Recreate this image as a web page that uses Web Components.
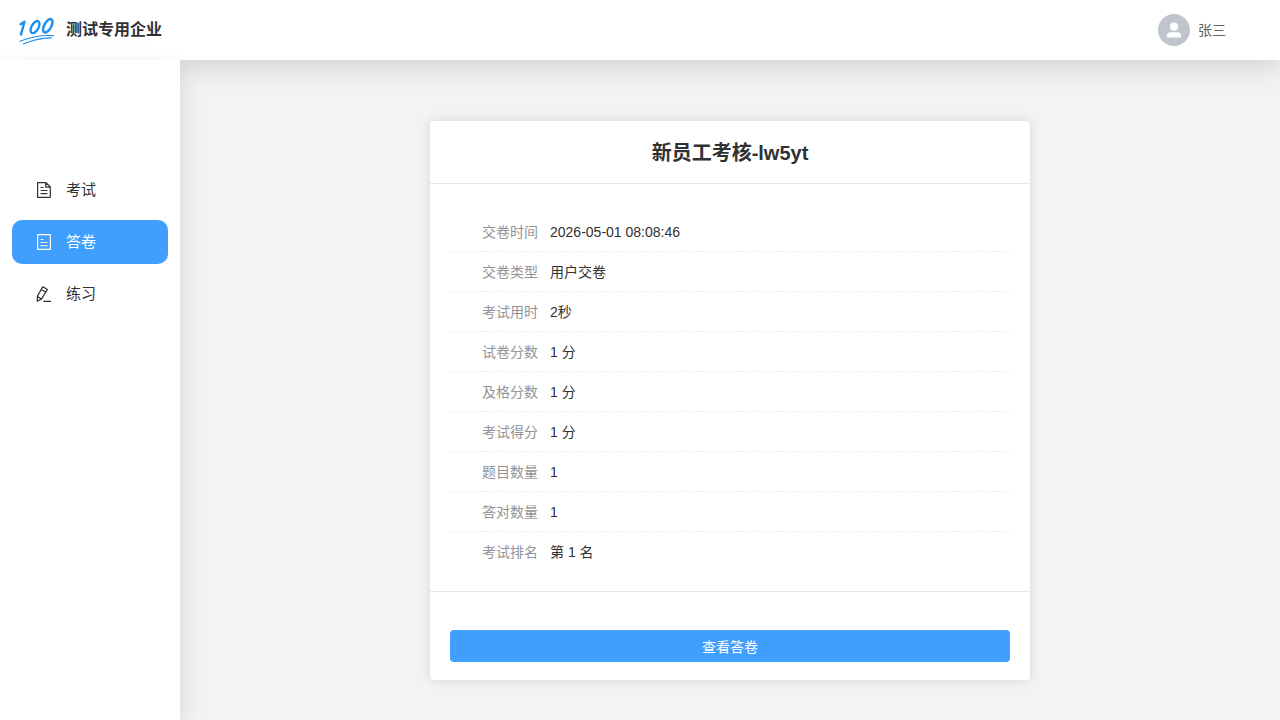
<!DOCTYPE html>
<html lang="zh-CN">
<head>
<meta charset="utf-8">
<meta name="viewport" content="width=device-width, initial-scale=1">
<title>新员工考核</title>
<style>
  html, body { height: 100%; }
  body {
    margin: 0;
    font-family: "Liberation Sans", "Noto Sans CJK SC", sans-serif;
    font-size: 14px;
    color: #303133;
    --primary: #409eff;
    --page: #f2f3f5;
    --muted: #909399;
    --line: #e4e7ed;
    --shadow-deep: 0 12px 32px 4px rgba(0,0,0,.04), 0 8px 20px rgba(0,0,0,.08);
    --shadow-light: 0 0 12px rgba(0,0,0,.12);
  }
</style>
</head>
<body>
<exam-app>
  <app-header slot="header" user="张三">测试专用企业</app-header>
  <nav-menu slot="side">
    <nav-item icon="exam">考试</nav-item>
    <nav-item icon="paper" active>答卷</nav-item>
    <nav-item icon="practice">练习</nav-item>
  </nav-menu>
  <result-card>
    <span slot="title">新员工考核-lw5yt</span>
    <result-list></result-list>
    <primary-button slot="footer">查看答卷</primary-button>
  </result-card>
</exam-app>

<script>
class BaseElement extends HTMLElement {
  connectedCallback() {
    if (!this.shadowRoot) this.attachShadow({ mode: "open" }).innerHTML = this.render();
  }
}

customElements.define("exam-app", class extends BaseElement {
  render() {
    return `<style>
      :host { display: grid; grid-template: 60px 1fr / 180px 1fr; min-height: 100vh; overflow: hidden; background: var(--page); }
      main { display: flex; justify-content: center; align-items: flex-start; padding: 61px 20px 40px; }
    </style>
    <slot name="header"></slot><slot name="side"></slot><main><slot></slot></main>`;
  }
});

customElements.define("app-header", class extends BaseElement {
  render() {
    return `<style>
      :host { display: flex; grid-column: 1 / -1; z-index: 1; align-items: center; justify-content: space-between; padding: 0 54px 0 18px; background: #fff; box-shadow: var(--shadow-deep); }
      .brand { display: flex; align-items: center; gap: 12px; margin: 0; font-size: 16px; line-height: 24px; font-weight: 700; }
      .user { display: flex; align-items: center; gap: 8px; color: #606266; line-height: 20px; }
      svg { display: block; }
    </style>
    <h1 class="brand">
      <svg width="36" height="30" viewBox="0 0 36 30" fill="none" stroke="#1e90ee" stroke-linecap="round" aria-hidden="true">
        <path d="M2.6 9.2 6.5 6.8 2.9 19.6" stroke-width="2.4" stroke-linejoin="round"/>
        <ellipse cx="17" cy="12.1" rx="3.4" ry="6.7" transform="rotate(30 17 12.1)" stroke-width="2.4"/>
        <ellipse cx="29.8" cy="10.8" rx="3.5" ry="7.4" transform="rotate(29 29.8 10.8)" stroke-width="2.5"/>
        <path d="M2 26.2C12 22.2 24 19.9 35.3 20.7M5.4 29C14 25.2 22 23.3 33.3 22.9" stroke-width="1.2"/>
      </svg>
      <slot></slot>
    </h1>
    <div class="user">
      <svg width="32" height="32" viewBox="0 0 32 32" aria-hidden="true">
        <circle cx="16" cy="16" r="16" fill="#c0c4cc"/>
        <circle cx="16" cy="12.7" r="4.1" fill="#fff"/>
        <path d="M9 23.6v-1.8q0-3.5 3.5-3.5h7q3.5 0 3.5 3.5v1.8z" fill="#fff"/>
      </svg>
      <span>${this.getAttribute("user")}</span>
    </div>`;
  }
});

customElements.define("nav-menu", class extends BaseElement {
  render() {
    return `<style>
      :host { display: block; z-index: 2; padding: 108px 12px 20px; background: #fff; box-shadow: var(--shadow-deep); }
      nav { display: flex; flex-direction: column; gap: 8px; }
    </style>
    <nav aria-label="主菜单"><slot></slot></nav>`;
  }
});

const icons = {
  exam: `<path d="M1.6.7H10l4.3 4.2v10.4H1.6zM9.8.9v4.2h4.3"/><path d="M4.6 5.5h2.8M4.6 8.5h6.8M4.6 11.6h6.8"/>`,
  paper: `<path d="M1.6.7h12.8v14.6H1.6z"/><path d="M4.6 5.5h2.8M4.6 8.5h6.8M4.6 11.6h6.8"/>`,
  practice: `<path d="M6.8.8 11.4 3.4 5.6 12.9 1.3 15.2 1.4 10.1zM5.2 3.6l4.6 2.7M1.5 10.5l3.9 2.4M7.4 15.3h7.6"/>`
};

customElements.define("nav-item", class extends BaseElement {
  render() {
    return `<style>
      :host { display: block; color: #303133; }
      a { display: flex; align-items: center; gap: 14px; height: 44px; padding: 0 24px; border-radius: 10px; color: inherit; text-decoration: none; font-size: 15px; line-height: 20px; }
      :host([active]) { color: #fff; }
      :host([active]) a { background: var(--primary); }
    </style>
    <a href="#${this.getAttribute("icon")}">
      <svg width="16" height="16" viewBox="0 0 16 16" fill="none" stroke="currentColor" stroke-width="1.2" stroke-linejoin="round" aria-hidden="true">${icons[this.getAttribute("icon")]}</svg>
      <slot></slot>
    </a>`;
  }
});

customElements.define("result-card", class extends BaseElement {
  render() {
    return `<style>
      :host { display: block; width: 100%; max-width: 600px; border-radius: 4px; background: #fff; box-shadow: var(--shadow-light); }
      h2 { margin: 0; padding: 17px 20px 15px; border-bottom: 1px solid var(--line); font-size: 20px; line-height: 30px; text-align: center; }
      .body { padding: 28px 20px 19px; }
      footer { padding: 38px 20px 18px; border-top: 1px solid var(--line); }
    </style>
    <h2><slot name="title"></slot></h2>
    <div class="body"><slot></slot></div>
    <footer><slot name="footer"></slot></footer>`;
  }
});

const results = [
  ["交卷时间", "2026-05-01 08:08:46"],
  ["交卷类型", "用户交卷"],
  ["考试用时", "2秒"],
  ["试卷分数", "1 分"],
  ["及格分数", "1 分"],
  ["考试得分", "1 分"],
  ["题目数量", "1"],
  ["答对数量", "1"],
  ["考试排名", "第 1 名"]
];

customElements.define("result-list", class extends BaseElement {
  render() {
    return `<style>
      :host { display: block; }
      dl { margin: 0; }
      .row { display: flex; gap: 12px; box-sizing: border-box; height: 40px; padding: 0 32px; border-bottom: 1px dashed #ebeef5; line-height: 40px; }
      .row:last-child { border-bottom: 0; }
      dt { color: var(--muted); }
      dd { margin: 0; }
    </style>
    <dl>${results.map(([k, v]) => `<div class="row"><dt>${k}</dt><dd>${v}</dd></div>`).join("")}</dl>`;
  }
});

customElements.define("primary-button", class extends BaseElement {
  render() {
    return `<style>
      :host { display: block; }
      button { display: block; width: 100%; height: 32px; padding: 0 16px; border: 0; border-radius: 4px; background: var(--primary); color: #fff; font: inherit; cursor: pointer; }
    </style>
    <button type="button"><slot></slot></button>`;
  }
});
</script>
</body>
</html>
